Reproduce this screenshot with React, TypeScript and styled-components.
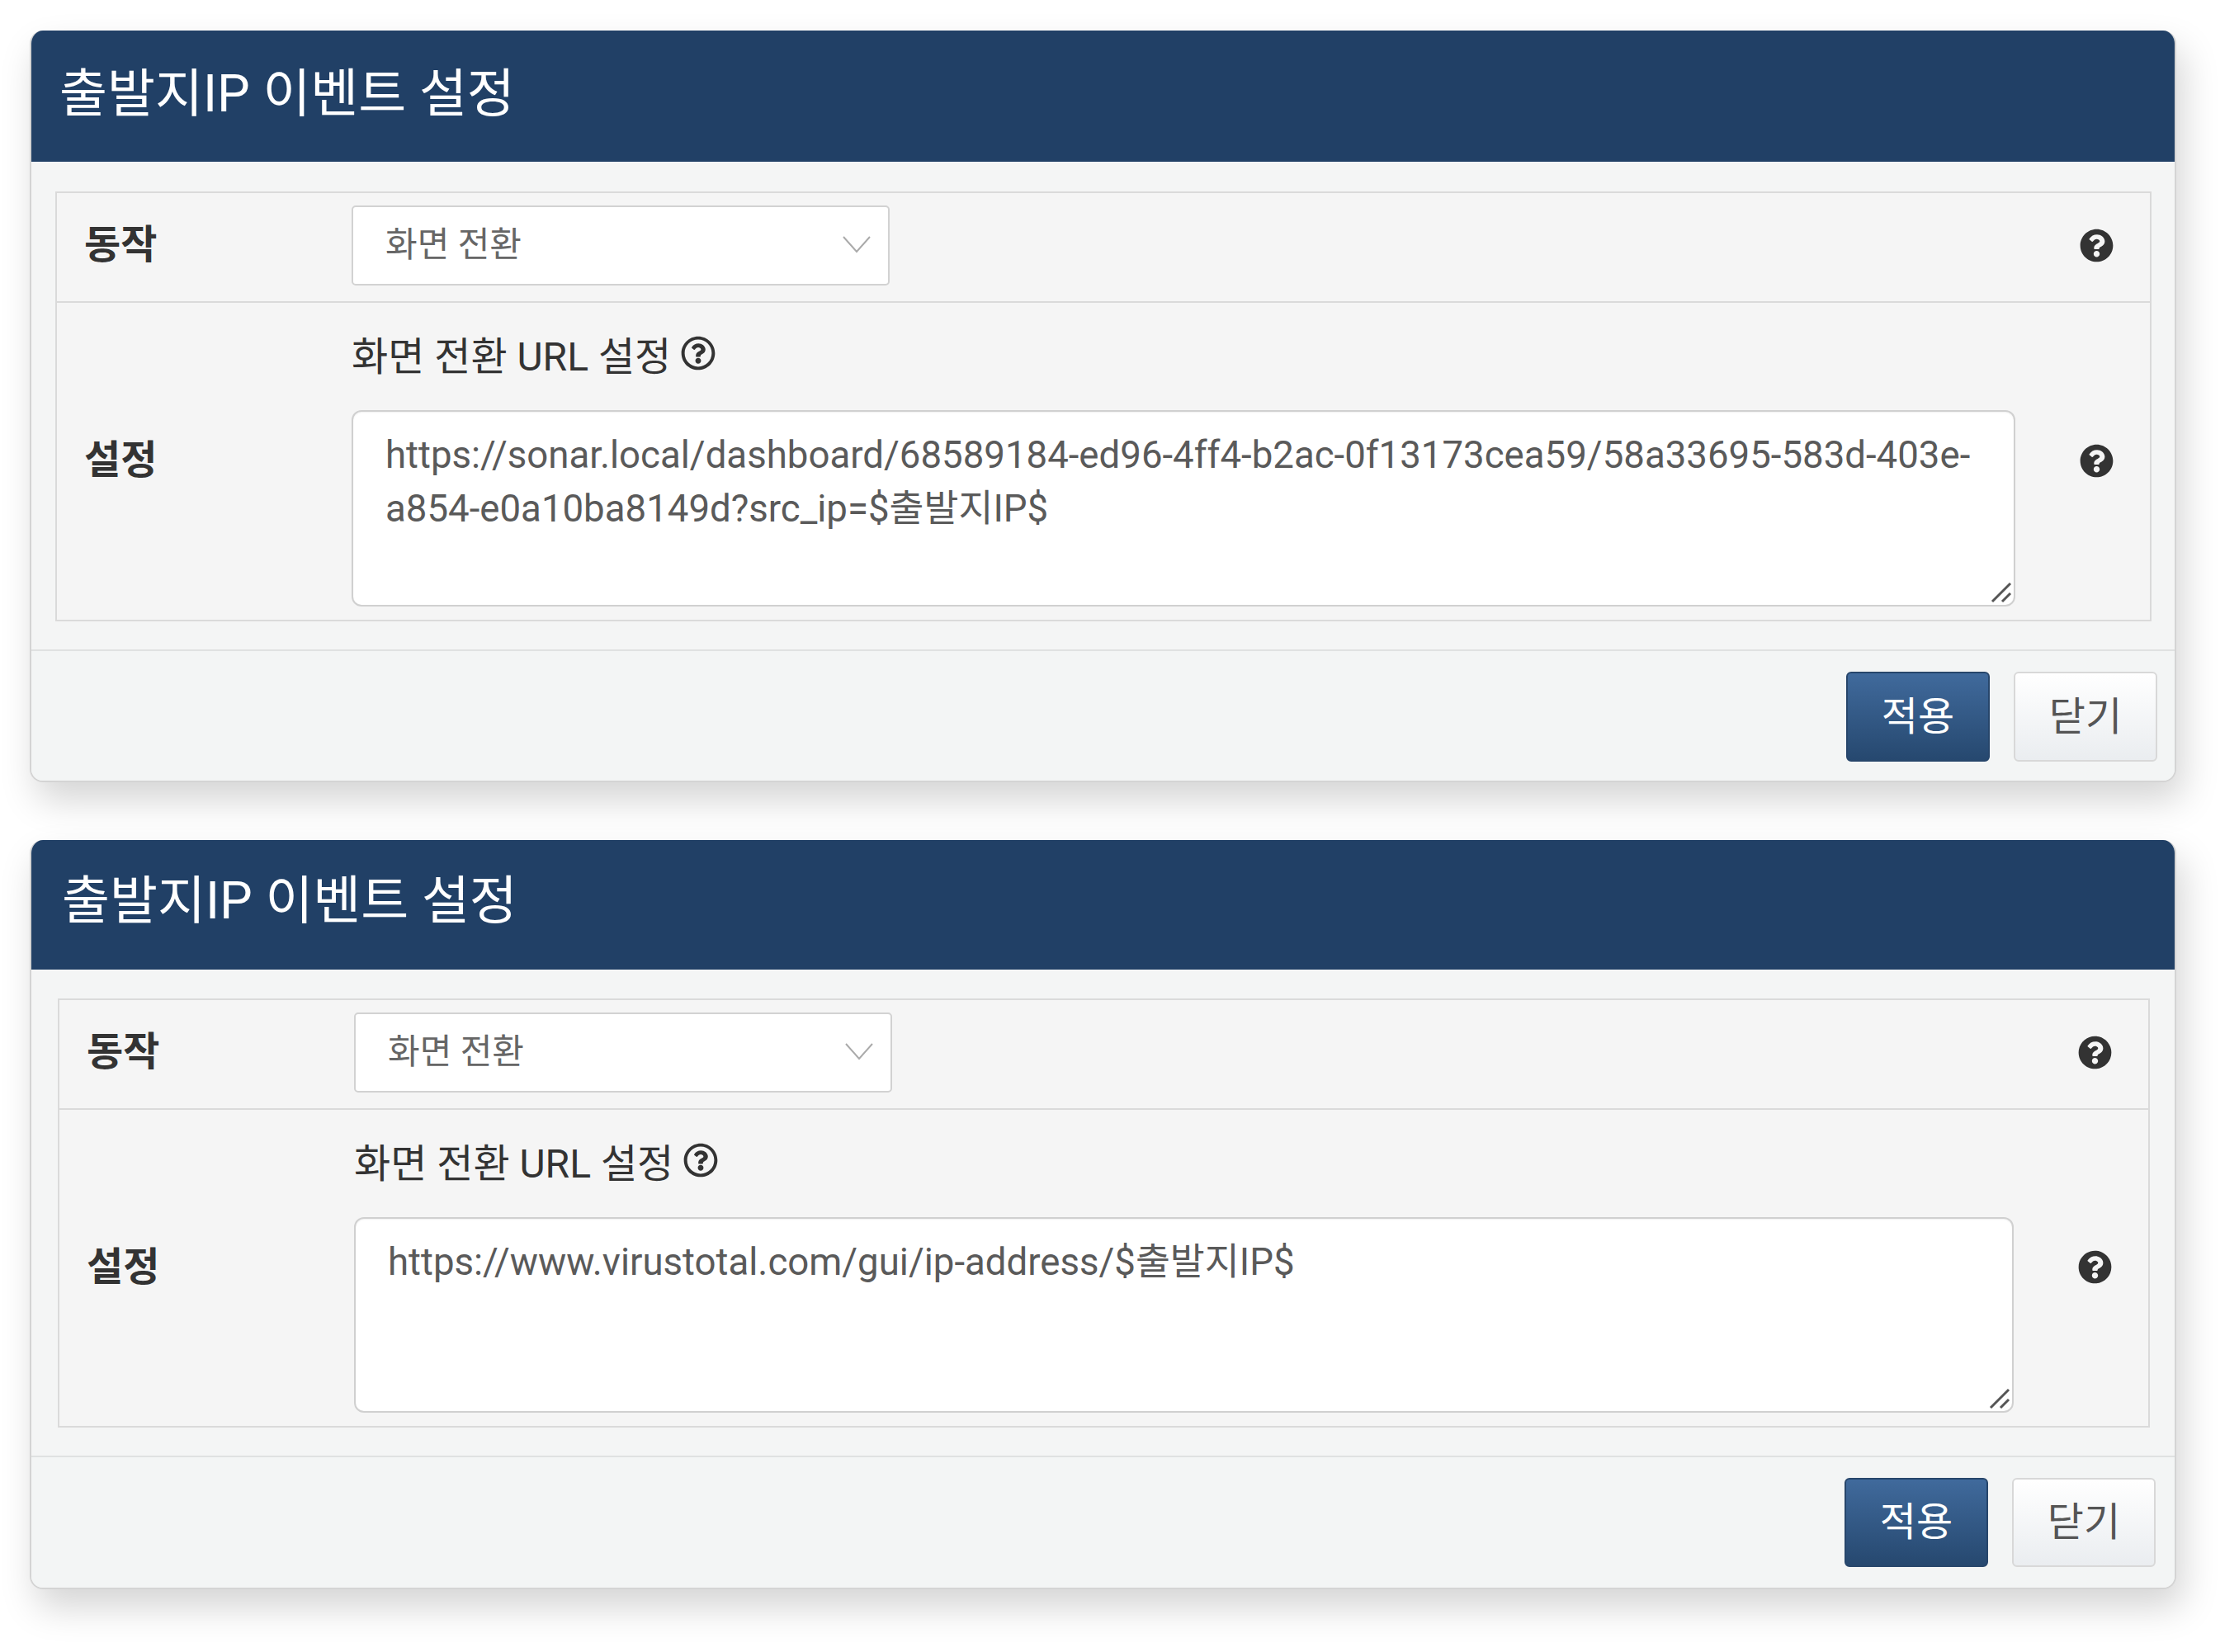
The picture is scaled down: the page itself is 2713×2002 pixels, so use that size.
import React from 'react';
import styled, { createGlobalStyle } from 'styled-components';
import { FaQuestionCircle, FaRegQuestionCircle } from 'react-icons/fa';

const Global = createGlobalStyle`
  html, body { margin: 0; padding: 0; background: #fff; }
  body { font-family: Roboto, "Noto Sans CJK KR", sans-serif; }
  * { box-sizing: border-box; }
`;

const Page = styled.div`
  width: 2713px;
  height: 2002px;
  padding: 37px 76px 0 36px;
  display: flex;
  flex-direction: column;
  gap: 70px;
  overflow: hidden;
`;

const Panel = styled.section`
  width: 2601px;
  background: #f4f5f5;
  border: 2px solid #d4d4d4;
  border-top: 0;
  border-radius: 16px;
  box-shadow: 8px 22px 44px rgba(0, 0, 0, 0.17);
  overflow: hidden;
`;

const Header = styled.header<{ $padLeft: number; $height: number; $padTop: number }>`
  height: ${(p) => p.$height}px;
  background: #214066;
  color: #fff;
  padding: ${(p) => p.$padTop}px 0 0 ${(p) => p.$padLeft}px;
  font-size: 63px;
  line-height: 70px;
  white-space: nowrap;
`;

const Table = styled.div<{ $left: number; $right: number; $top: number; $bottom: number }>`
  margin: ${(p) => p.$top}px ${(p) => p.$right}px ${(p) => p.$bottom}px ${(p) => p.$left}px;
  background: #f5f5f5;
  border: 2px solid #dadada;
`;

const Row = styled.div`
  display: grid;
  grid-template-columns: 357px 1fr 163px;
  align-items: center;
  padding: 16px 0;
  &:first-child { padding-bottom: 19px; }
  & + & { border-top: 2px solid #dadada; }
`;

const Label = styled.div`
  padding: 0 0 12px 33px;
  font-size: 48px;
  font-weight: 700;
  color: #333;
`;

const Control = styled.div`
  min-width: 0;
`;

const HelpCell = styled.div`
  display: flex;
  justify-content: center;
  padding: 0 0 2px 34px;
  font-size: 41px;
  color: #333;
  line-height: 0;
`;

const SelectBox = styled.div`
  position: relative;
  width: 652px;
  height: 97px;
  margin-top: -1px;
`;

const Select = styled.select`
  appearance: none;
  width: 100%;
  height: 100%;
  padding: 0 39px 2px;
  background: #fff;
  border: 2px solid #d2d2d2;
  border-radius: 5px;
  font: 400 42px Roboto, "Noto Sans CJK KR", sans-serif;
  color: #666;
`;

const Chevron = styled.svg`
  position: absolute;
  right: 23px;
  top: 36px;
  width: 34px;
  height: 22px;
  pointer-events: none;
`;

const FieldTitle = styled.div`
  display: flex;
  align-items: center;
  gap: 12px;
  height: 76px;
  margin: 7px 0 31px;
  font-size: 48px;
  color: #333;
  white-space: nowrap;
`;

const FieldIcon = styled.span`
  display: inline-flex;
  font-size: 42px;
  line-height: 0;
`;

const AreaBox = styled.div<{ $height: number }>`
  position: relative;
  height: ${(p) => p.$height}px;
`;

const TextArea = styled.textarea`
  display: block;
  width: 100%;
  height: 100%;
  padding: 20px 39px;
  background: #fff;
  border: 2px solid #d0d0d0;
  border-radius: 12px;
  box-shadow: inset 0 1px 2px rgba(0, 0, 0, 0.06);
  resize: none;
  font: 400 45.6px/65px Roboto, "Noto Sans CJK KR", sans-serif;
  color: #5a5a5a;
  outline: none;
`;

const Grip = styled.svg`
  position: absolute;
  right: 4px;
  bottom: 4px;
  width: 26px;
  height: 26px;
`;

const Footer = styled.footer<{ $top: number; $bottom: number; $right: number }>`
  display: flex;
  justify-content: flex-end;
  gap: 29px;
  padding: ${(p) => p.$top}px ${(p) => p.$right}px ${(p) => p.$bottom}px 0;
  border-top: 2px solid #dfe1e1;
  background: #f3f5f5;
`;

const Button = styled.button<{ $primary?: boolean; $height: number }>`
  width: 174px;
  height: ${(p) => p.$height}px;
  border-radius: 6px;
  font: 400 48px Roboto, "Noto Sans CJK KR", sans-serif;
  padding: 0 0 10px;
  color: ${(p) => (p.$primary ? '#fff' : '#555')};
  background: ${(p) =>
    p.$primary
      ? 'linear-gradient(#406a9c, #26486f)'
      : 'linear-gradient(#ffffff, #eaedf0)'};
  border: 2px solid ${(p) => (p.$primary ? '#27466b' : '#d8d8d8')};
`;

type Config = {
  url: string;
  head: { left: number; height: number; top: number };
  table: { left: number; right: number; top: number; bottom: number };
  areaHeight: number;
  foot: { top: number; bottom: number; right: number };
  btn: number;
};

const Dialog = ({ url, head, table, areaHeight, foot, btn }: Config) => (
  <Panel>
    <Header $padLeft={head.left} $height={head.height} $padTop={head.top}>출발지IP 이벤트 설정</Header>
    <Table $left={table.left} $right={table.right} $top={table.top} $bottom={table.bottom}>
      <Row>
        <Label>동작</Label>
        <Control>
          <SelectBox>
            <Select defaultValue="screen">
              <option value="screen">화면 전환</option>
            </Select>
            <Chevron viewBox="0 0 34 22" fill="none" stroke="#aaa" strokeWidth="2">
              <path d="M1 2 L17 20 L33 2" />
            </Chevron>
          </SelectBox>
        </Control>
        <HelpCell><FaQuestionCircle /></HelpCell>
      </Row>
      <Row>
        <Label>설정</Label>
        <Control>
          <FieldTitle>
            화면 전환 URL 설정
            <FieldIcon><FaRegQuestionCircle /></FieldIcon>
          </FieldTitle>
          <AreaBox $height={areaHeight}>
            <TextArea defaultValue={url} spellCheck={false} />
            <Grip viewBox="0 0 26 26" stroke="#555" strokeWidth="3" fill="none">
              <path d="M2 24 L24 2 M14 24 L24 14" />
            </Grip>
          </AreaBox>
        </Control>
        <HelpCell><FaQuestionCircle /></HelpCell>
      </Row>
    </Table>
    <Footer $top={foot.top} $bottom={foot.bottom} $right={foot.right}>
      <Button $primary $height={btn}>적용</Button>
      <Button $height={btn}>닫기</Button>
    </Footer>
  </Panel>
);

export default function App() {
  return (
    <Page>
      <Global />
      <Dialog
        url="https://sonar.local/dashboard/68589184-ed96-4ff4-b2ac-0f13173cea59/58a33695-583d-403e-a854-e0a10ba8149d?src_ip=$출발지IP$"
        head={{ left: 34, height: 159, top: 42 }}
        table={{ left: 29, right: 28, top: 36, bottom: 34 }}
        areaHeight={238}
        foot={{ top: 25, bottom: 23, right: 21 }}
        btn={109}
      />
      <Dialog
        url="https://www.virustotal.com/gui/ip-address/$출발지IP$"
        head={{ left: 37, height: 157, top: 39 }}
        table={{ left: 32, right: 30, top: 35, bottom: 34 }}
        areaHeight={237}
        foot={{ top: 25, bottom: 25, right: 23 }}
        btn={108}
      />
    </Page>
  );
}
